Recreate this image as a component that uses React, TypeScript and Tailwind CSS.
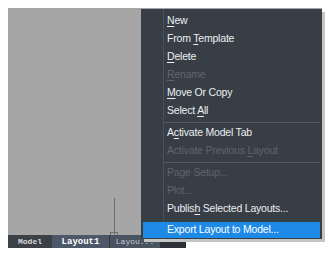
import React from "react";

type Item = {
  pre: string;
  key?: string;
  post?: string;
  disabled?: boolean;
};

const groups: Item[][] = [
  [
    { pre: "", key: "N", post: "ew" },
    { pre: "From ", key: "T", post: "emplate" },
    { pre: "", key: "D", post: "elete" },
    { pre: "", key: "R", post: "ename", disabled: true },
    { pre: "", key: "M", post: "ove Or Copy" },
    { pre: "Select ", key: "A", post: "ll" },
  ],
  [
    { pre: "A", key: "c", post: "tivate Model Tab" },
    { pre: "Activate Previous ", key: "L", post: "ayout", disabled: true },
  ],
  [
    { pre: "Page Setup...", disabled: true },
    { pre: "Plot...", disabled: true },
    { pre: "Publis", key: "h", post: " Selected Layouts..." },
  ],
];

function Row({ item }: { item: Item }) {
  return (
    <div
      className={`h-[18px] flex items-center pl-[26px] ${
        item.disabled ? "text-[#5f656d]" : "text-[#eceef0]"
      }`}
    >
      <span>
        {item.pre}
        {item.key && <span className="underline underline-offset-2">{item.key}</span>}
        {item.post}
      </span>
    </div>
  );
}

export default function App() {
  return (
    <div className="relative w-[332px] h-[253px] bg-white pt-2 pl-2 overflow-hidden">
      <div className="flex flex-col w-[314px]">
        {/* drawing area */}
        <div className="relative h-[227px] bg-[#a6a6a6]">
          <div className="absolute left-[106px] top-[190px] w-px h-[37px] bg-[#6e6e6e]" />
          <div className="absolute left-[102px] top-[224px] w-[8px] h-[3px] border border-b-0 border-[#6e6e6e]" />
        </div>

        {/* layout tabs */}
        <div className="flex h-[13px] text-[8px] leading-[14px] font-['Liberation_Mono',monospace]">
          <div className="w-[44px] bg-[#3c4148] text-[#d9d9d9] text-center font-bold">Model</div>
          <div className="w-[57px] bg-[#4c5767] text-white font-bold text-center text-[9px]">Layout1</div>
          <div className="w-px bg-[#2f343a]" />
          <div className="w-[50px] bg-[#4a5461] text-[#c8ccd2] text-center whitespace-nowrap overflow-hidden">Layou...</div>
          <div className="w-[26px] bg-[#2e3238]" />
        </div>
      </div>

      {/* context menu */}
      <div className="absolute left-[141px] top-[9px] w-[181px] bg-[#383e46] pt-[3px] pb-[1px] text-[10.5px] tracking-[-0.2px] font-['Liberation_Sans',sans-serif] shadow-[3px_3px_0_#c4c4c4]">
        <div className="absolute left-[22px] top-0 bottom-0 w-px bg-[#4b5159]" />
        {groups.map((g, i) => (
          <div key={i}>
            {i > 0 && <div className="h-[4px] flex items-center pl-[22px] pr-[2px]"><div className="h-px w-full bg-[#525860]" /></div>}
            {g.map((it, j) => (
              <Row key={j} item={it} />
            ))}
          </div>
        ))}
        <div className="relative mt-[4px] mx-[2px] h-[16px] bg-[#1e8ae8] text-white flex items-center pl-[24px]">
          Export Layout to Model...
        </div>
      </div>
    </div>
  );
}
